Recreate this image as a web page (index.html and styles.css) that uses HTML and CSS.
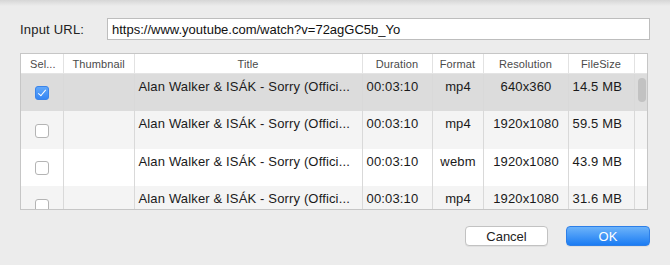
FILE: index.html
```html
<!DOCTYPE html>
<html lang="en">
<head>
    <meta charset="UTF-8">
    <title>Download Video</title>
    <link rel="stylesheet" href="styles.css">
</head>
<body>
    <div class="dialog">
        <div class="url-row">
            <label for="url">Input URL:</label>
            <input type="text" id="url" value="https://www.youtube.com/watch?v=72agGC5b_Yo">
        </div>

        <div class="list">
            <table>
                <colgroup>
                    <col class="c-sel"><col class="c-thumb"><col class="c-title"><col class="c-dur">
                    <col class="c-fmt"><col class="c-res"><col class="c-size"><col class="c-bar">
                </colgroup>
                <thead>
                    <tr>
                        <th class="left">Sel...</th>
                        <th class="left">Thumbnail</th>
                        <th>Title</th>
                        <th>Duration</th>
                        <th>Format</th>
                        <th>Resolution</th>
                        <th>FileSize</th>
                        <th class="last"></th>
                    </tr>
                </thead>
                <tbody>
                    <tr class="selected">
                        <td class="check"><span class="box on"></span></td>
                        <td></td>
                        <td>Alan Walker &amp; ISÁK - Sorry (Offici...</td>
                        <td>00:03:10</td>
                        <td class="mid">mp4</td>
                        <td class="mid">640x360</td>
                        <td>14.5 MB</td>
                        <td class="last"></td>
                    </tr>
                    <tr class="odd">
                        <td class="check"><span class="box"></span></td>
                        <td></td>
                        <td>Alan Walker &amp; ISÁK - Sorry (Offici...</td>
                        <td>00:03:10</td>
                        <td class="mid">mp4</td>
                        <td class="mid">1920x1080</td>
                        <td>59.5 MB</td>
                        <td class="last"></td>
                    </tr>
                    <tr>
                        <td class="check"><span class="box"></span></td>
                        <td></td>
                        <td>Alan Walker &amp; ISÁK - Sorry (Offici...</td>
                        <td>00:03:10</td>
                        <td class="mid">webm</td>
                        <td class="mid">1920x1080</td>
                        <td>43.9 MB</td>
                        <td class="last"></td>
                    </tr>
                    <tr class="odd">
                        <td class="check"><span class="box"></span></td>
                        <td></td>
                        <td>Alan Walker &amp; ISÁK - Sorry (Offici...</td>
                        <td>00:03:10</td>
                        <td class="mid">mp4</td>
                        <td class="mid">1920x1080</td>
                        <td>31.6 MB</td>
                        <td class="last"></td>
                    </tr>
                </tbody>
            </table>
            <div class="scroll-thumb"></div>
        </div>

        <div class="buttons">
            <button class="btn">Cancel</button>
            <button class="btn primary">OK</button>
        </div>
    </div>
</body>
</html>
```
FILE: styles.css
```css
body {
    margin: 0;
    padding: 0;
    background: linear-gradient(#d6d6d6, #ececec 6px) #ececec;
    font-family: "Liberation Sans", Arial, sans-serif;
    font-size: 13px;
    color: #1a1a1a;
    height: 265px;
    overflow: hidden;
}

.dialog {
    padding: 18px 20px 0 20px;
}

.url-row {
    display: flex;
    align-items: center;
    height: 22px;
}

.url-row label {
    width: 87px;
    font-size: 13px;
    letter-spacing: 0.2px;
    color: #222;
}

.url-row input {
    box-sizing: border-box;
    width: 543px;
    height: 22px;
    border: 1px solid #bdbdbd;
    padding: 0 4px;
    font-family: inherit;
    font-size: 13px;
    color: #111;
    background: #fff;
}

.list {
    position: relative;
    margin-top: 13px;
    width: 628px;
    height: 157px;
    box-sizing: border-box;
    border: 1px solid #c6c6c6;
    background: #fff;
    overflow: hidden;
}

table {
    border-collapse: collapse;
    table-layout: fixed;
    width: 626px;
}

.c-sel { width: 42px; }
.c-thumb { width: 71px; }
.c-title { width: 228px; }
.c-dur { width: 70px; }
.c-fmt { width: 51px; }
.c-res { width: 85px; }
.c-size { width: 66px; }
.c-bar { width: 13px; }

th {
    height: 19px;
    padding: 0 4px;
    font-weight: normal;
    font-size: 11px;
    letter-spacing: 0.1px;
    color: #4a4a4a;
    text-align: center;
    white-space: nowrap;
    background: #fff;
    border-bottom: 1px solid #e4e4e4;
    border-right: 1px solid #e2e2e2;
}

th.left {
    text-align: left;
    padding-left: 9px;
}

td {
    height: 37.5px;
    padding: 5px 3px 0 4px;
    vertical-align: top;
    white-space: nowrap;
    overflow: hidden;
    letter-spacing: 0.15px;
    border-right: 1px solid #d9d9d9;
    box-sizing: border-box;
}

th.last, td.last {
    border-right: none;
}

td.mid {
    text-align: center;
}

td.check {
    vertical-align: middle;
    padding: 0;
    text-align: center;
}

tr.odd td {
    background: #f4f4f4;
}

tr.selected td {
    background: #dcdcdc;
}

.box {
    display: inline-block;
    width: 12px;
    height: 12px;
    border: 1px solid #b4b4b4;
    border-radius: 3px;
    background: #fff;
    vertical-align: middle;
    position: relative;
}

.box.on {
    border-color: #3a84ea;
    background: linear-gradient(#62a8fa, #3586f4);
}

.box.on::after {
    content: "";
    position: absolute;
    left: 4px;
    top: 1px;
    width: 3px;
    height: 7px;
    border: solid #fff;
    border-width: 0 1.5px 1.5px 0;
    transform: rotate(40deg);
}

.scroll-thumb {
    position: absolute;
    right: 1px;
    top: 24px;
    width: 8px;
    height: 24px;
    border-radius: 4px;
    background: #c2c2c2;
}

.buttons {
    display: flex;
    justify-content: flex-end;
    gap: 18px;
    margin-top: 16px;
    width: 630px;
}

.btn {
    width: 83px;
    height: 20px;
    border: 1px solid #c2c2c2;
    border-radius: 4px;
    background: #fff;
    font-family: inherit;
    font-size: 13px;
    color: #222;
    padding: 0;
    box-shadow: 0 1px 0 rgba(0, 0, 0, 0.05);
}

.btn.primary {
    width: 84px;
    border-color: #2d7fe8;
    background: linear-gradient(#6cb3fa, #1b7cf3);
    color: #fff;
}
```
